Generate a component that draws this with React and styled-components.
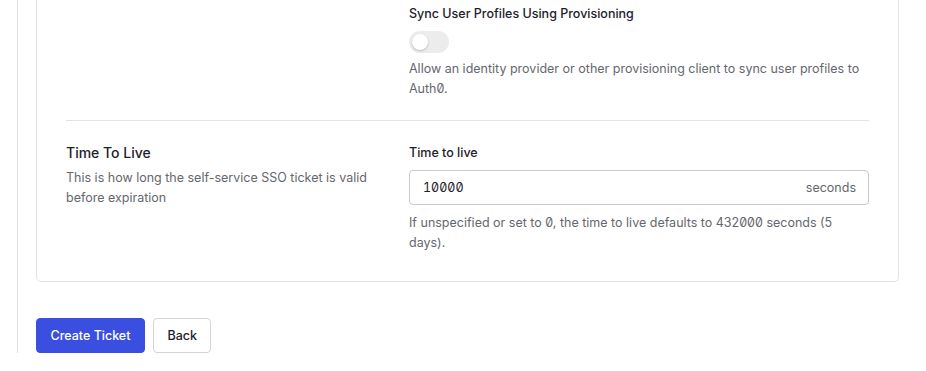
import React from 'react'
import styled, { createGlobalStyle } from 'styled-components'

const GlobalStyle = createGlobalStyle`
  body {
    margin: 0;
    background: #fff;
    font-family: Inter, "Noto Sans", sans-serif;
    font-feature-settings: "zero" 1;
    color: #1e212a;
  }
`

const Page = styled.div`
  margin-left: 17px;
  padding-left: 18px;
  border-left: 1px solid #e0e0e0;
  width: 863px;
`

const Card = styled.div`
  border: 1px solid #e3e3e3;
  border-top: none;
  border-radius: 0 0 5px 5px;
  padding: 4px 29px 28px;
`

const Section = styled.div`
  display: grid;
  grid-template-columns: 343px 1fr;
  padding: ${p => p.pad || '0'};
  border-bottom: ${p => (p.divided ? '1px solid #e3e3e3' : 'none')};
`

const Intro = styled.div`
  padding-right: 24px;
`

const SectionTitle = styled.div`
  font-size: 14px;
  font-weight: 500;
  line-height: 20px;
`

const Muted = styled.p`
  margin: ${p => p.margin || '0'};
  font-size: 12.5px;
  line-height: 20px;
  color: #65676e;
`

const Label = styled.div`
  font-size: 12.5px;
  font-weight: 500;
  line-height: 20px;
`

const Toggle = styled.button`
  display: block;
  width: 40px;
  height: 22px;
  margin: 7px 0 6px;
  padding: 0 3px;
  border: none;
  border-radius: 11px;
  background: #ececec;
  cursor: pointer;

  &::before {
    content: '';
    display: block;
    width: 16px;
    height: 16px;
    border-radius: 50%;
    background: #fff;
    box-shadow: 0 1px 2px rgba(0, 0, 0, 0.22);
  }
`

const Field = styled.div`
  display: flex;
  align-items: center;
  height: 35px;
  margin: 7px 0 8px;
  padding: 0 12px 0 13px;
  border: 1px solid #c9cace;
  border-radius: 4px;
  box-sizing: border-box;
`

const Input = styled.input`
  flex: 1;
  min-width: 0;
  border: none;
  outline: none;
  padding: 0;
  font-family: Inter, "Noto Sans", sans-serif;
  font-feature-settings: "zero" 1, "tnum" 1;
  font-size: 12.5px;
  color: #1e212a;
  background: transparent;
`

const Suffix = styled.span`
  font-size: 12.5px;
  color: #65676e;
`

const Actions = styled.div`
  display: flex;
  gap: 8px;
  margin-top: 36px;
`

const Button = styled.button`
  height: 35px;
  padding: 0 13.5px;
  border-radius: 4px;
  border: 1px solid ${p => (p.primary ? '#3a4fe0' : '#d3d4d8')};
  background: ${p => (p.primary ? '#3a4fe0' : '#fff')};
  color: ${p => (p.primary ? '#fff' : '#1e212a')};
  font-family: Inter, "Noto Sans", sans-serif;
  font-size: 12.5px;
  font-weight: 500;
  cursor: pointer;
`

export default function App() {
  return (
    <>
      <GlobalStyle />
      <Page>
        <Card>
          <Section divided pad="0 0 21px">
            <div />
            <div>
              <Label>Sync User Profiles Using Provisioning</Label>
              <Toggle aria-label="Sync User Profiles Using Provisioning" />
              <Muted>
                Allow an identity provider or other provisioning client to sync user profiles to
                Auth0.
              </Muted>
            </div>
          </Section>
          <Section pad="22px 0 0">
            <Intro>
              <SectionTitle>Time To Live</SectionTitle>
              <Muted margin="5px 0 0">
                This is how long the self-service SSO ticket is valid before expiration
              </Muted>
            </Intro>
            <div>
              <Label>Time to live</Label>
              <Field>
                <Input defaultValue="10000" />
                <Suffix>seconds</Suffix>
              </Field>
              <Muted>
                If unspecified or set to 0, the time to live defaults to 432000 seconds (5 days).
              </Muted>
            </div>
          </Section>
        </Card>
        <Actions>
          <Button primary>Create Ticket</Button>
          <Button>Back</Button>
        </Actions>
      </Page>
    </>
  )
}
